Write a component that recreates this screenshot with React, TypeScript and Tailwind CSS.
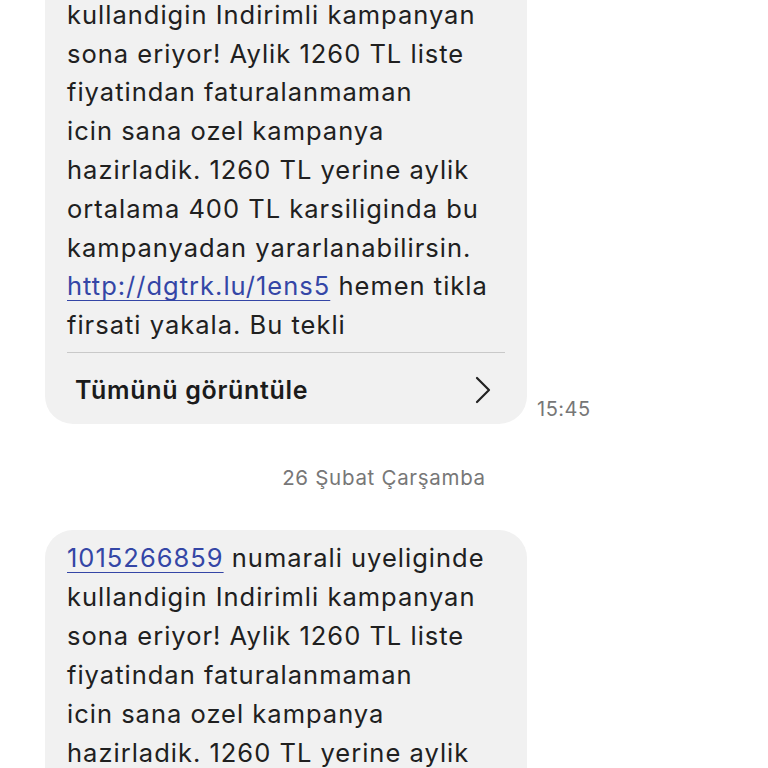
import React from 'react'

const body = [
  'kullandigin Indirimli kampanyan',
  'sona eriyor! Aylik 1260 TL liste',
  'fiyatindan faturalanmaman',
  'icin sana ozel kampanya',
  'hazirladik. 1260 TL yerine aylik',
  'ortalama 400 TL karsiliginda bu',
  'kampanyadan yararlanabilirsin.',
]

function Link({ children }: { children: React.ReactNode }) {
  return <span className="text-[#3446a6] underline decoration-1 underline-offset-[5px]">{children}</span>
}

function MessageText({ full }: { full: boolean }) {
  return (
    <div className={`text-[25.5px] tracking-[1px] text-[#202020] ${full ? 'leading-[38.8px]' : 'leading-[39px]'}`}>
      <div className="whitespace-nowrap">
        <Link>1015266859</Link> numarali uyeliginde
      </div>
      {body.map((line) => (
        <div key={line} className="whitespace-nowrap">{line}</div>
      ))}
      {full && (
        <>
          <div className="whitespace-nowrap">
            <Link>http://dgtrk.lu/1ens5</Link> hemen tikla
          </div>
          <div className="whitespace-nowrap">firsati yakala. Bu tekli</div>
        </>
      )}
    </div>
  )
}

export default function App() {
  return (
    <div className="w-[768px] h-[768px] overflow-hidden bg-white" style={{ fontFamily: 'Inter, "Noto Sans", sans-serif' }}>
      <div className="-mt-[52px] flex flex-col">
        <div className="flex items-end pl-[45px]">
          <div className="w-[482px] rounded-[28px] bg-[#f1f1f1] px-[22px] pt-[9px]">
            <MessageText full />
            <div className="mt-[7px] h-px bg-[#c9c9c9]" />
            <div className="flex h-[71px] items-center justify-between pl-[8px] pr-[12px] pt-[4px]">
              <span className="text-[25px] font-semibold tracking-[0.7px] text-[#1b1b1b]">Tümünü görüntüle</span>
              <svg width="20" height="28" viewBox="0 0 20 28" fill="none" stroke="#222" strokeWidth="2.2" strokeLinecap="round" strokeLinejoin="round">
                <path d="M4 2 L16 14 L4 26" />
              </svg>
            </div>
          </div>
          <span className="ml-[10px] mb-[0px] text-[20px] tracking-[0.5px] text-[#777]">15:45</span>
        </div>

        <div className="flex h-[106px] items-center justify-center pt-[2px]">
          <span className="text-[20.5px] tracking-[0.7px] text-[#777]">26 Şubat Çarşamba</span>
        </div>

        <div className="flex pl-[45px]">
          <div className="w-[482px] rounded-[28px] bg-[#f1f1f1] px-[22px] pt-[8px] pb-[20px]">
            <MessageText full={false} />
          </div>
        </div>
      </div>
    </div>
  )
}
